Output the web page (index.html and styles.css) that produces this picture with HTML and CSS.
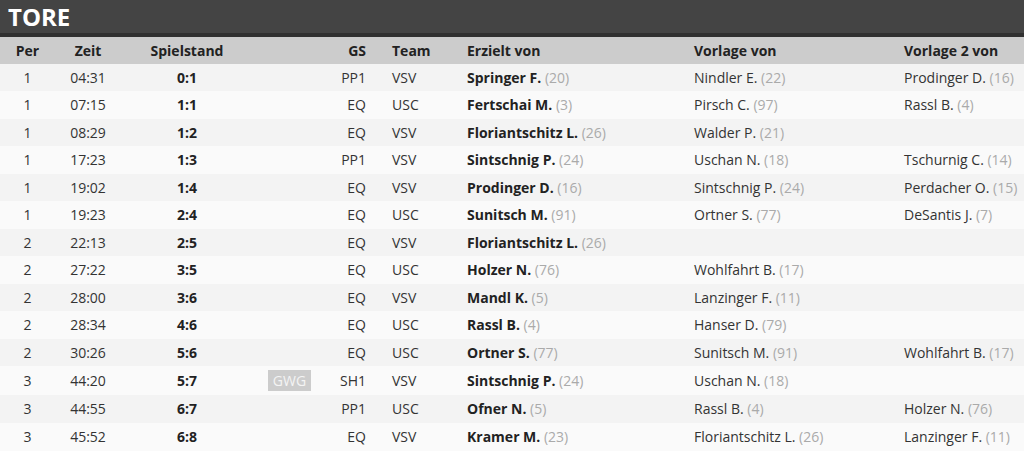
FILE: index.html
```html
<!DOCTYPE html>
<html lang="de">
<head>
<meta charset="utf-8">
<title>Tore</title>
<link rel="stylesheet" href="styles.css">
</head>
<body>
<div class="panel">
  <div class="panel-title">TORE</div>
  <table class="goals">
    <colgroup>
      <col class="c-per"><col class="c-zeit"><col class="c-score"><col class="c-badge"><col class="c-gs"><col class="c-team"><col class="c-scorer"><col class="c-a1"><col class="c-a2">
    </colgroup>
    <thead>
      <tr>
        <th class="center">Per</th>
        <th class="center">Zeit</th>
        <th class="center">Spielstand</th>
        <th></th>
        <th class="right">GS</th>
        <th>Team</th>
        <th>Erzielt von</th>
        <th>Vorlage von</th>
        <th>Vorlage 2 von</th>
      </tr>
    </thead>
    <tbody>
      <tr><td class="center">1</td><td class="center">04:31</td><td class="center b">0:1</td><td></td><td class="right">PP1</td><td>VSV</td><td><b>Springer F.</b> <span class="num">(20)</span></td><td>Nindler E. <span class="num">(22)</span></td><td>Prodinger D. <span class="num">(16)</span></td></tr>
      <tr><td class="center">1</td><td class="center">07:15</td><td class="center b">1:1</td><td></td><td class="right">EQ</td><td>USC</td><td><b>Fertschai M.</b> <span class="num">(3)</span></td><td>Pirsch C. <span class="num">(97)</span></td><td>Rassl B. <span class="num">(4)</span></td></tr>
      <tr><td class="center">1</td><td class="center">08:29</td><td class="center b">1:2</td><td></td><td class="right">EQ</td><td>VSV</td><td><b>Floriantschitz L.</b> <span class="num">(26)</span></td><td>Walder P. <span class="num">(21)</span></td><td></td></tr>
      <tr><td class="center">1</td><td class="center">17:23</td><td class="center b">1:3</td><td></td><td class="right">PP1</td><td>VSV</td><td><b>Sintschnig P.</b> <span class="num">(24)</span></td><td>Uschan N. <span class="num">(18)</span></td><td>Tschurnig C. <span class="num">(14)</span></td></tr>
      <tr><td class="center">1</td><td class="center">19:02</td><td class="center b">1:4</td><td></td><td class="right">EQ</td><td>VSV</td><td><b>Prodinger D.</b> <span class="num">(16)</span></td><td>Sintschnig P. <span class="num">(24)</span></td><td>Perdacher O. <span class="num">(15)</span></td></tr>
      <tr><td class="center">1</td><td class="center">19:23</td><td class="center b">2:4</td><td></td><td class="right">EQ</td><td>USC</td><td><b>Sunitsch M.</b> <span class="num">(91)</span></td><td>Ortner S. <span class="num">(77)</span></td><td>DeSantis J. <span class="num">(7)</span></td></tr>
      <tr><td class="center">2</td><td class="center">22:13</td><td class="center b">2:5</td><td></td><td class="right">EQ</td><td>VSV</td><td><b>Floriantschitz L.</b> <span class="num">(26)</span></td><td></td><td></td></tr>
      <tr><td class="center">2</td><td class="center">27:22</td><td class="center b">3:5</td><td></td><td class="right">EQ</td><td>USC</td><td><b>Holzer N.</b> <span class="num">(76)</span></td><td>Wohlfahrt B. <span class="num">(17)</span></td><td></td></tr>
      <tr><td class="center">2</td><td class="center">28:00</td><td class="center b">3:6</td><td></td><td class="right">EQ</td><td>VSV</td><td><b>Mandl K.</b> <span class="num">(5)</span></td><td>Lanzinger F. <span class="num">(11)</span></td><td></td></tr>
      <tr><td class="center">2</td><td class="center">28:34</td><td class="center b">4:6</td><td></td><td class="right">EQ</td><td>USC</td><td><b>Rassl B.</b> <span class="num">(4)</span></td><td>Hanser D. <span class="num">(79)</span></td><td></td></tr>
      <tr><td class="center">2</td><td class="center">30:26</td><td class="center b">5:6</td><td></td><td class="right">EQ</td><td>USC</td><td><b>Ortner S.</b> <span class="num">(77)</span></td><td>Sunitsch M. <span class="num">(91)</span></td><td>Wohlfahrt B. <span class="num">(17)</span></td></tr>
      <tr><td class="center">3</td><td class="center">44:20</td><td class="center b">5:7</td><td class="center"><span class="badge">GWG</span></td><td class="right">SH1</td><td>VSV</td><td><b>Sintschnig P.</b> <span class="num">(24)</span></td><td>Uschan N. <span class="num">(18)</span></td><td></td></tr>
      <tr><td class="center">3</td><td class="center">44:55</td><td class="center b">6:7</td><td></td><td class="right">PP1</td><td>USC</td><td><b>Ofner N.</b> <span class="num">(5)</span></td><td>Rassl B. <span class="num">(4)</span></td><td>Holzer N. <span class="num">(76)</span></td></tr>
      <tr><td class="center">3</td><td class="center">45:52</td><td class="center b">6:8</td><td></td><td class="right">EQ</td><td>VSV</td><td><b>Kramer M.</b> <span class="num">(23)</span></td><td>Floriantschitz L. <span class="num">(26)</span></td><td>Lanzinger F. <span class="num">(11)</span></td></tr>
    </tbody>
  </table>
</div>
</body>
</html>
```

FILE: styles.css
```css
html, body {
  margin: 0;
  padding: 0;
  background: #fafafa;
}
body {
  font-family: "Open Sans", "Liberation Sans", sans-serif;
  font-size: 14px;
  color: #333;
}
.panel-title {
  background: #444;
  color: #fff;
  font-weight: 700;
  font-size: 24px;
  line-height: 33px;
  height: 33px;
  padding-left: 8px;
  border-bottom: 4px solid #303030;
}
.goals {
  width: 1024px;
  border-collapse: collapse;
  table-layout: fixed;
}
.c-per { width: 55px; }
.c-zeit { width: 66px; }
.c-score { width: 132px; }
.c-badge { width: 73px; }
.c-gs { width: 56px; }
.c-team { width: 75px; }
.c-scorer { width: 227px; }
.c-a1 { width: 210px; }
.c-a2 { width: 130px; }
.goals th,
.goals td {
  padding: 4px 10px;
  line-height: 19.5px;
  text-align: left;
  white-space: nowrap;
  vertical-align: middle;
}
.goals th {
  background: #ccc;
  color: #222;
  font-weight: 700;
  padding-top: 3.5px;
  padding-bottom: 3.5px;
}
.goals tbody tr:nth-child(odd) { background: #f3f3f3; }
.goals tbody tr:nth-child(even) { background: #fafafa; }
.goals .center { text-align: center; }
.goals .right { text-align: right; padding-right: 16px; }
.goals .b, .goals b { font-weight: 700; color: #222; }
.num { color: #aaa; }
.badge {
  display: inline-block;
  background: #ccc;
  color: #f4f4f4;
  padding: 1px 5px;
  line-height: 19px;
}
```
